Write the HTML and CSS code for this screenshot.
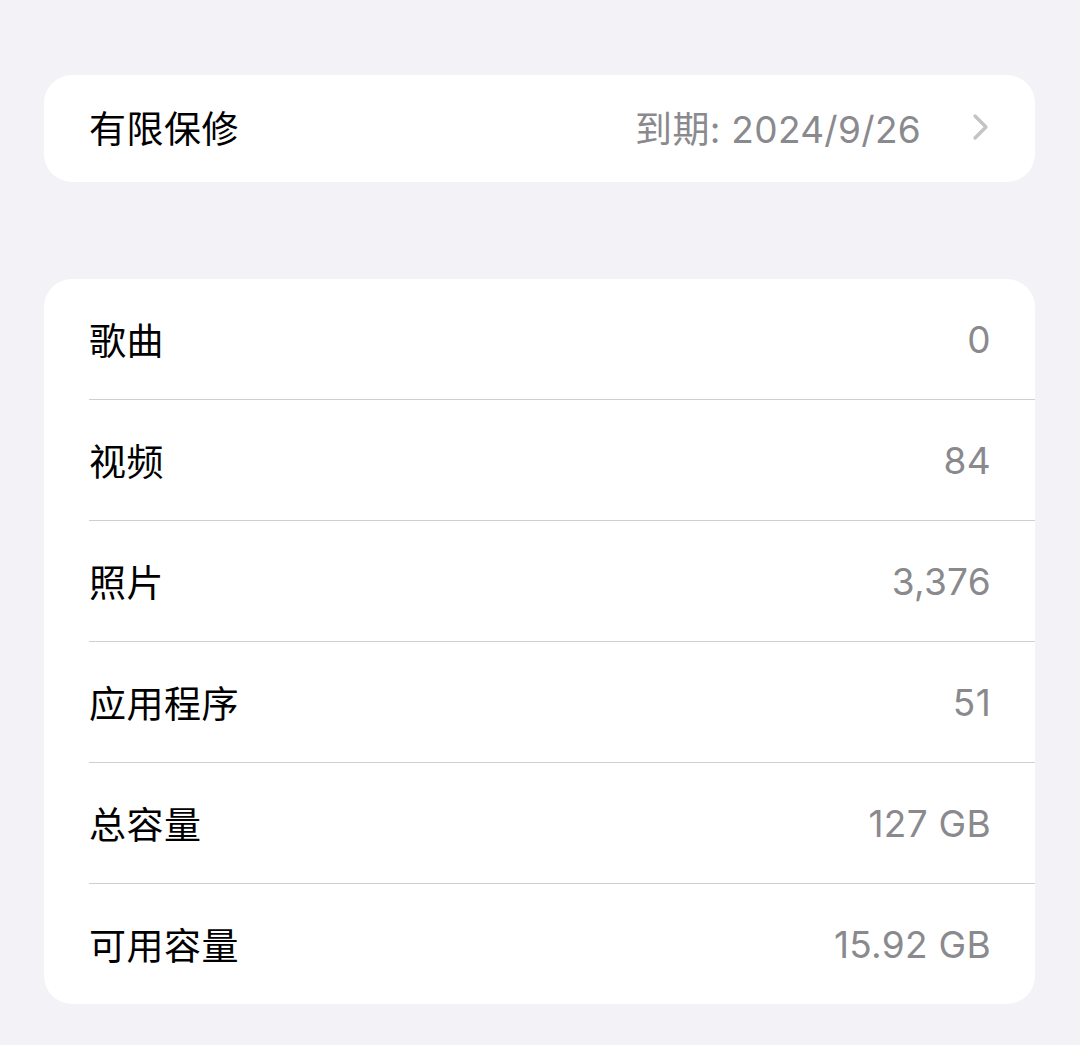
FILE: index.html
```html
<!DOCTYPE html>
<html lang="zh-CN">
<head>
    <meta charset="UTF-8">
    <meta name="viewport" content="width=device-width, initial-scale=1.0">
    <title>关于本机</title>
    <link rel="stylesheet" href="styles.css">
</head>
<body>
    <main class="page">
        <section class="card">
            <div class="row">
                <span class="label">有限保修</span>
                <span class="value">到期: 2024/9/26</span>
                <svg class="chevron" width="18" height="28" viewBox="0 0 18 28">
                    <path d="M3 3 L14 14 L3 25" fill="none" stroke="#c4c4c7" stroke-width="3.4" stroke-linecap="round" stroke-linejoin="round"/>
                </svg>
            </div>
        </section>

        <section class="card list">
            <div class="row tall">
                <span class="label">歌曲</span>
                <span class="value">0</span>
            </div>
            <div class="row tall">
                <span class="label">视频</span>
                <span class="value">84</span>
            </div>
            <div class="row tall">
                <span class="label">照片</span>
                <span class="value">3,376</span>
            </div>
            <div class="row tall">
                <span class="label">应用程序</span>
                <span class="value">51</span>
            </div>
            <div class="row tall">
                <span class="label">总容量</span>
                <span class="value">127 GB</span>
            </div>
            <div class="row tall">
                <span class="label">可用容量</span>
                <span class="value">15.92 GB</span>
            </div>
        </section>
    </main>
</body>
</html>
```

FILE: styles.css
```css
/* General Styling */
body {
    margin: 0;
    padding: 0;
    background-color: #f2f2f7;
    font-family: 'Inter', 'Noto Sans CJK SC', sans-serif;
    color: #000000;
}

.page {
    padding: 75px 45px 0 44px;
    display: flex;
    flex-direction: column;
    gap: 97px;
}

.card {
    background: #ffffff;
    border-radius: 28px;
    overflow: hidden;
}

.row {
    display: flex;
    align-items: center;
    height: 107px;
    box-sizing: border-box;
    padding: 0 45px 4px 45px;
    font-size: 37px;
}

.row.tall {
    height: 121px;
    padding: 0 44px 0 0;
    margin-left: 45px;
    border-bottom: 1px solid #cfcfd3;
}

.row.tall:last-child {
    height: 120px;
    border-bottom: none;
}

.label {
    flex: 1;
    font-family: 'Noto Sans CJK SC', sans-serif;
    letter-spacing: 0.5px;
}

.value {
    color: #8a8a8e;
    letter-spacing: 0.3px;
}

.chevron {
    margin-left: 51px;
}
```
